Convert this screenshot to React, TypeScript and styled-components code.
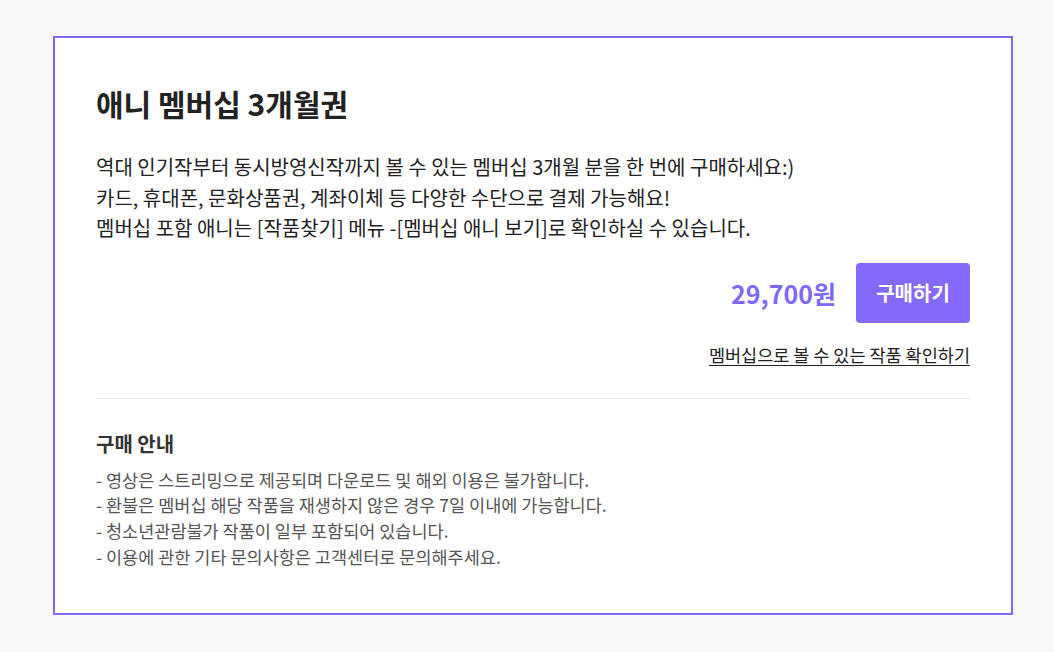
import styled, { createGlobalStyle } from 'styled-components'

const GlobalStyle = createGlobalStyle`
  html, body {
    margin: 0;
    padding: 0;
    background: #f8f8f8;
  }
  body {
    font-family: "Noto Sans CJK KR", "Noto Sans", sans-serif;
    color: #222;
  }
`

const Page = styled.div`
  padding: 36px 0 0 53px;
`

const Card = styled.section`
  box-sizing: border-box;
  width: 960px;
  background: #fff;
  border: 2px solid #8069f7;
  padding: 44px 41px 44px;
`

const Title = styled.h2`
  margin: 0;
  font-size: 30px;
  font-weight: 700;
  line-height: 42px;
  color: #222;
`

const Description = styled.p`
  margin: 28px 0 0;
  font-size: 20px;
  line-height: 30.5px;
  color: #222;
`

const BuyRow = styled.div`
  display: flex;
  align-items: center;
  justify-content: flex-end;
  gap: 20px;
  margin-top: 19px;
`

const Price = styled.strong`
  font-size: 25px;
  font-weight: 700;
  color: #8069f7;
`

const BuyButton = styled.button`
  width: 114px;
  height: 60px;
  border: 0;
  border-radius: 4px;
  background: #8469fb;
  color: #fff;
  font-family: inherit;
  font-size: 20px;
  font-weight: 700;
  cursor: pointer;
`

const LinkRow = styled.div`
  display: flex;
  justify-content: flex-end;
  margin-top: 19px;
`

const CheckLink = styled.a`
  font-size: 17.5px;
  line-height: 26px;
  color: #222;
  text-decoration: underline;
  text-underline-offset: 3px;
`

const Divider = styled.hr`
  margin: 30px 0 0;
  border: 0;
  border-top: 1px solid #e4e4e4;
`

const GuideTitle = styled.h3`
  margin: 30px 0 0;
  font-size: 20px;
  font-weight: 700;
  line-height: 30px;
  color: #333;
`

const GuideList = styled.ul`
  list-style: none;
  margin: 8px 0 0;
  padding: 0;
`

const GuideItem = styled.li`
  font-size: 17.5px;
  line-height: 25.7px;
  color: #555;
`

const guides = [
  '- 영상은 스트리밍으로 제공되며 다운로드 및 해외 이용은 불가합니다.',
  '- 환불은 멤버십 해당 작품을 재생하지 않은 경우 7일 이내에 가능합니다.',
  '- 청소년관람불가 작품이 일부 포함되어 있습니다.',
  '- 이용에 관한 기타 문의사항은 고객센터로 문의해주세요.',
]

export default function App() {
  return (
    <>
      <GlobalStyle />
      <Page>
        <Card>
          <Title>애니 멤버십 3개월권</Title>
          <Description>
            역대 인기작부터 동시방영신작까지 볼 수 있는 멤버십 3개월 분을 한 번에 구매하세요:)
            <br />
            카드, 휴대폰, 문화상품권, 계좌이체 등 다양한 수단으로 결제 가능해요!
            <br />
            멤버십 포함 애니는 [작품찾기] 메뉴 -[멤버십 애니 보기]로 확인하실 수 있습니다.
          </Description>
          <BuyRow>
            <Price>29,700원</Price>
            <BuyButton>구매하기</BuyButton>
          </BuyRow>
          <LinkRow>
            <CheckLink href="#">멤버십으로 볼 수 있는 작품 확인하기</CheckLink>
          </LinkRow>
          <Divider />
          <GuideTitle>구매 안내</GuideTitle>
          <GuideList>
            {guides.map(text => (
              <GuideItem key={text}>{text}</GuideItem>
            ))}
          </GuideList>
        </Card>
      </Page>
    </>
  )
}
